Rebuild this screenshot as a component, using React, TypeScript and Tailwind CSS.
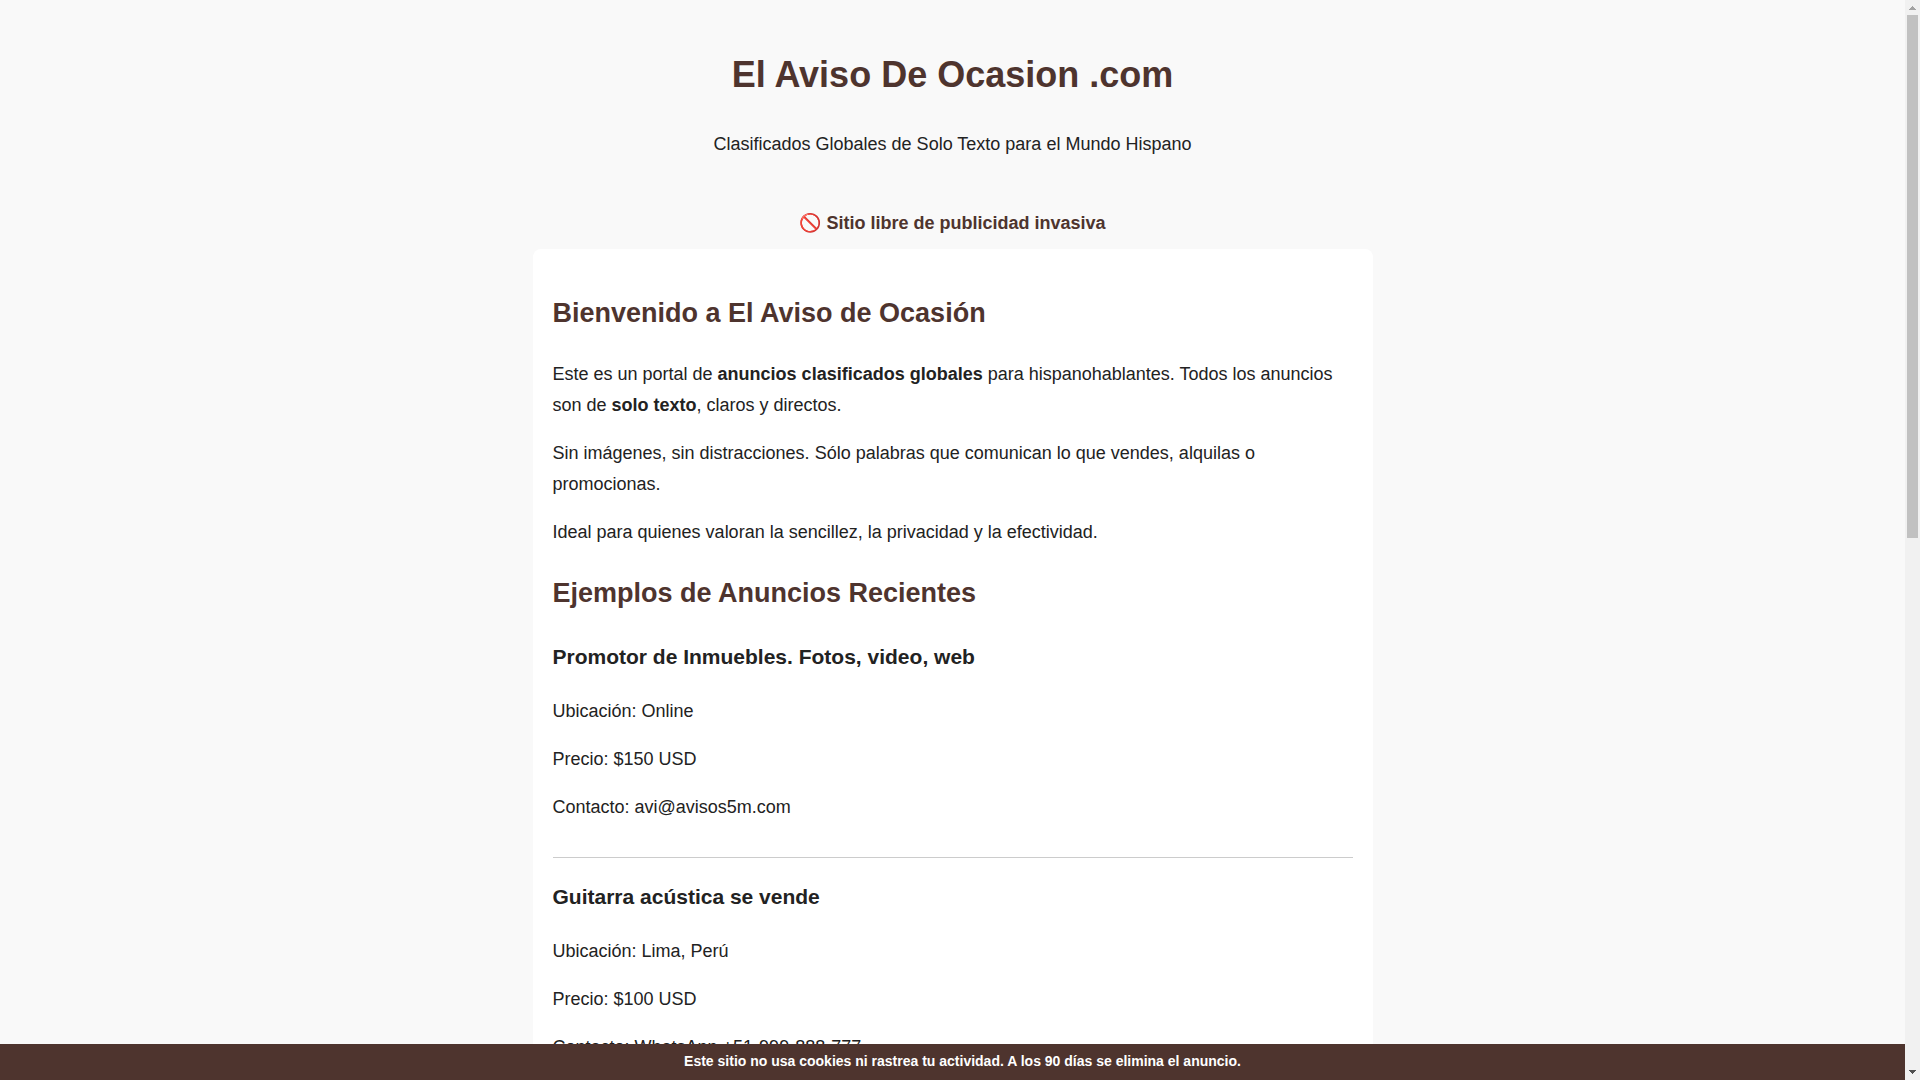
import React from "react";

interface Ad {
  title: string;
  details: string[];
}

const ads: Ad[] = [
  {
    title: "Promotor de Inmuebles. Fotos, video, web",
    details: ["Ubicación: Online", "Precio: $150 USD", "Contacto: avi@avisos5m.com"],
  },
  {
    title: "Guitarra acústica se vende",
    details: ["Ubicación: Lima, Perú", "Precio: $100 USD", "Contacto: WhatsApp +51-999-888-777"],
  },
];

function Classified({ ad }: { ad: Ad }) {
  return (
    <article className="mb-[21px] border-b border-[#cccccc] pb-[34px]">
      <h3 className="mb-[21px] text-[21px] leading-[36px] font-bold">{ad.title}</h3>
      <div className="flex flex-col gap-[17px]">
        {ad.details.map((line) => (
          <p key={line}>{line}</p>
        ))}
      </div>
    </article>
  );
}

function Scrollbar() {
  return (
    <div aria-hidden="true" className="flex w-[15px] shrink-0 flex-col items-center bg-[#f1f1f1]">
      <svg className="h-[15px] w-[15px] shrink-0" viewBox="0 0 15 15" shapeRendering="crispEdges">
        <path
          d="M7 6h1v1h-1zM6 7h3v1h-3zM5 8h5v1h-5zM4 9h7v1h-7z"
          fill="#a3a3a3"
        />
      </svg>
      <div className="flex w-full flex-1 flex-col px-[2px]">
        <div className="h-[49.8%] bg-[#c1c1c1]" />
      </div>
      <svg className="h-[15px] w-[15px] shrink-0" viewBox="0 0 15 15" shapeRendering="crispEdges">
        <path
          d="M4 5h7v1h-7zM5 6h5v1h-5zM6 7h3v1h-3zM7 8h1v1h-1z"
          fill="#505050"
        />
      </svg>
    </div>
  );
}

export default function App() {
  return (
    <div className="flex h-screen bg-[#f9f9f9] font-['Liberation_Sans',Arial,sans-serif] text-[18px] leading-[31px] text-[#222222]">
      <div className="flex min-w-0 flex-1 flex-col">
        <div className="min-h-0 flex-1 overflow-hidden">
          <header className="px-5 pt-11 pb-12 text-center">
            <h1 className="mb-6 text-[36px] leading-[61px] font-bold text-[#4e342e]">El Aviso De Ocasion .com</h1>
            <p>Clasificados Globales de Solo Texto para el Mundo Hispano</p>
          </header>
          <p className="pb-2.5 text-center font-bold text-[#4e342e]">🚫 Sitio libre de publicidad invasiva</p>
          <main className="mx-auto max-w-[840px] rounded-lg bg-white px-5 pt-[41px] pb-5">
            <section className="mb-[22px]">
              <h2 className="mb-[23px] text-[27px] leading-[46px] font-bold text-[#4e342e]">
                Bienvenido a El Aviso de Ocasión
              </h2>
              <div className="flex flex-col gap-[17px]">
                <p>
                  Este es un portal de <strong>anuncios clasificados globales</strong> para hispanohablantes. Todos los
                  anuncios son de <strong>solo texto</strong>, claros y directos.
                </p>
                <p>
                  Sin imágenes, sin distracciones. Sólo palabras que comunican lo que vendes, alquilas o promocionas.
                </p>
                <p>Ideal para quienes valoran la sencillez, la privacidad y la efectividad.</p>
              </div>
            </section>
            <section>
              <h2 className="mb-[23px] text-[27px] leading-[46px] font-bold text-[#4e342e]">
                Ejemplos de Anuncios Recientes
              </h2>
              {ads.map((ad) => (
                <Classified key={ad.title} ad={ad} />
              ))}
            </section>
          </main>
        </div>
        <footer className="shrink-0 bg-[#4e342e] pt-[5px] pb-[7px] pl-5 text-center text-[14px] leading-[24px] font-bold text-white">
          Este sitio no usa cookies ni rastrea tu actividad. A los 90 días se elimina el anuncio.
        </footer>
      </div>
      <Scrollbar />
    </div>
  );
}
